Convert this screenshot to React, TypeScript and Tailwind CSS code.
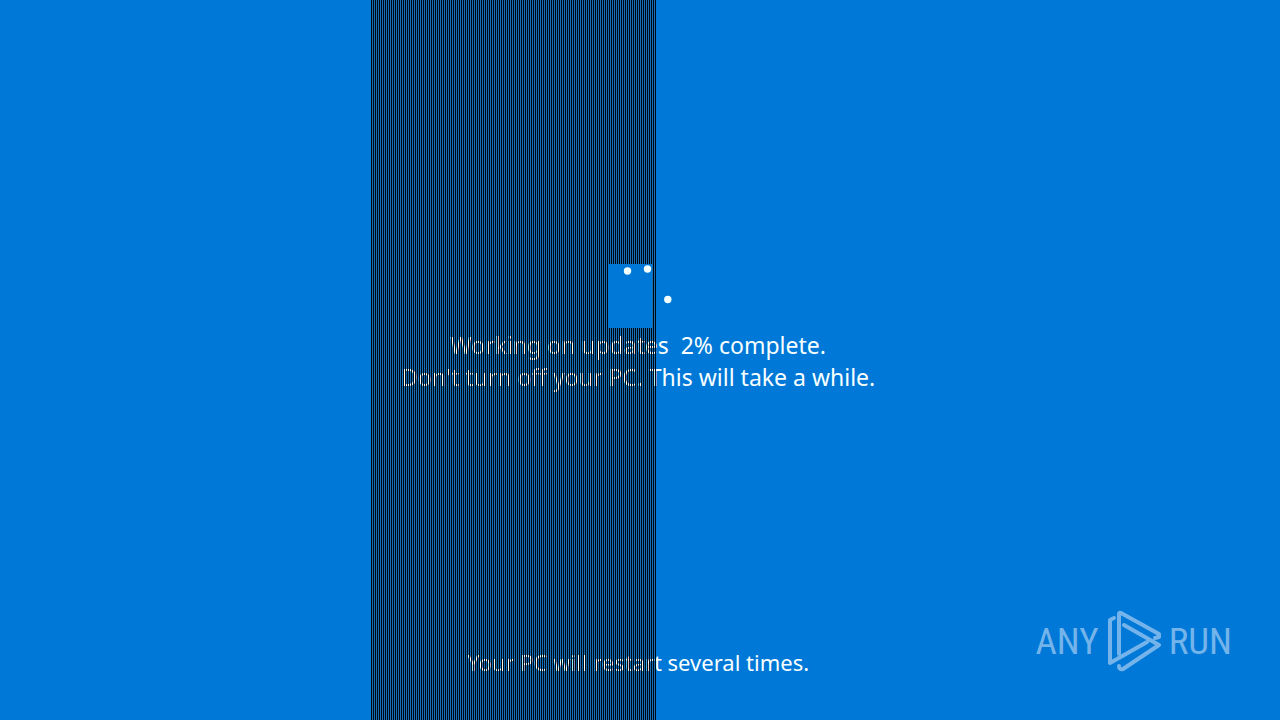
const fontStack = "font-['Noto_Sans','Open_Sans',sans-serif]";

const Spinner = () => (
  <div className="relative z-20 h-16 w-16" role="status" aria-label="Working">
    <div className="absolute left-0 top-0 h-16 w-11 bg-[#0078d7]" />
    <svg className="absolute inset-0 h-16 w-16" viewBox="0 0 64 64" fill="#f4ffff">
      <circle cx="19.5" cy="7" r="3.7" />
      <circle cx="39.5" cy="5" r="3.7" />
      <circle cx="59.8" cy="35.5" r="3.7" />
    </svg>
  </div>
);

const Watermark = () => (
  <div className="absolute bottom-12 right-12 flex items-center gap-2 font-['Roboto_Condensed','Liberation_Sans_Narrow','DejaVu_Sans_Condensed',sans-serif] text-[37px] leading-none text-[#74b4ea]">
    <span>ANY</span>
    <svg
      className="h-[62px] w-[54px]"
      viewBox="0 0 54 62"
      fill="none"
      stroke="currentColor"
      strokeWidth="4"
      strokeLinecap="round"
      strokeLinejoin="round"
    >
      <path d="M7 8L3 10V53L40 32" />
      <path d="M12 44V4Q12 2 14 3L52 24V27L48 28" />
      <path d="M17 15L52 35L16 59Q12 60 12 56" />
    </svg>
    <span>RUN</span>
  </div>
);

const App = () => {
  return (
    <main
      className={`relative isolate flex min-h-screen flex-col items-center overflow-hidden bg-[#0078d7] text-[23px] leading-8 text-[#f8ffff] ${fontStack}`}
    >
      {/* Interlaced band left over from the screen redraw: dull tint below the text, dark lines above it */}
      <div className="absolute inset-y-0 left-[29%] right-[48.75%] -z-10 bg-[#146fb4]" />
      <div className="absolute inset-y-0 left-[29%] right-[48.75%] z-10 bg-[repeating-linear-gradient(90deg,#000814_0_1px,transparent_1px_2px)]" />

      <div className="flex flex-col items-center pt-[264px] text-center">
        <Spinner />
        <p className="whitespace-pre pr-1 pt-px">Working on updates  2% complete.</p>
        <p className="pr-1">Don't turn off your PC. This will take a while.</p>
      </div>

      <p className="mt-auto pb-[42px] pr-1 text-[22px]">Your PC will restart several times.</p>

      <Watermark />
    </main>
  );
};

export default App;
